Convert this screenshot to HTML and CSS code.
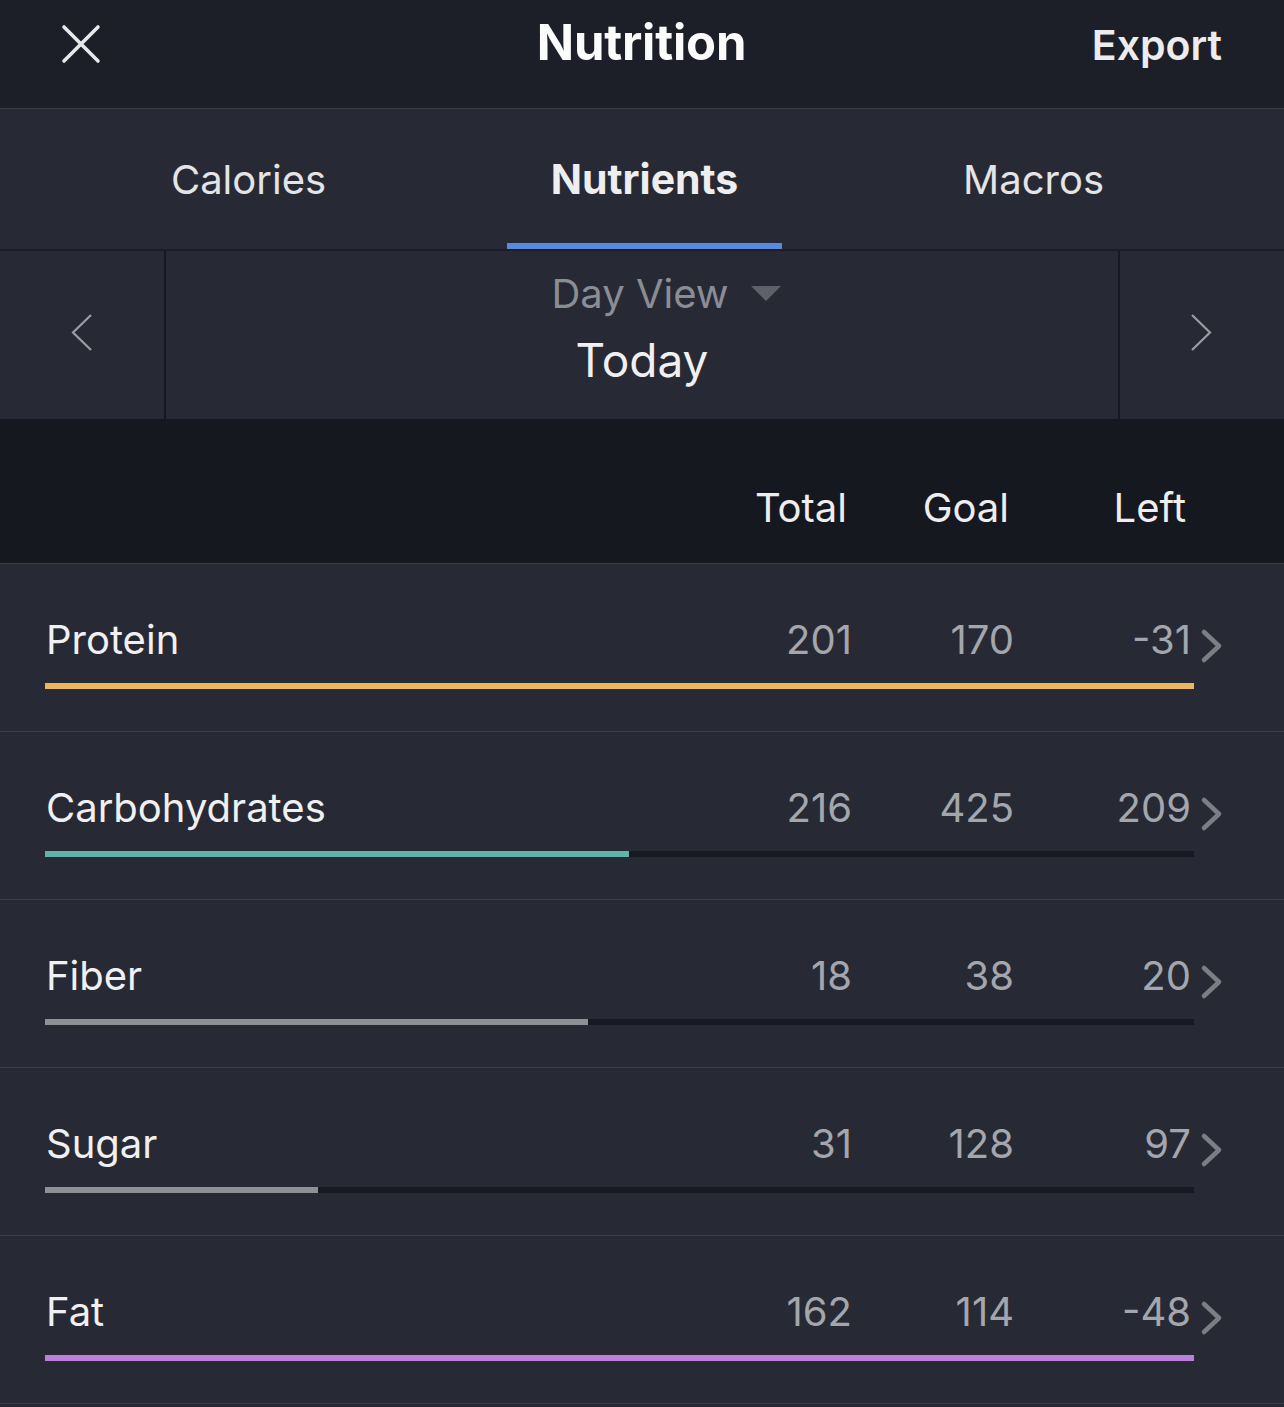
FILE: index.html
```html
<!DOCTYPE html>
<html lang="en">
<head>
  <meta charset="UTF-8">
  <title>Nutrition</title>
  <link rel="stylesheet" href="styles.css">
</head>
<body>
  <header class="topbar">
    <button class="close-btn" aria-label="Close">
      <svg width="40" height="40" viewBox="0 0 40 40"><path d="M3 3 L37 37 M37 3 L3 37" stroke="#e8e8ea" stroke-width="3.6" stroke-linecap="round" fill="none"/></svg>
    </button>
    <h1>Nutrition</h1>
    <a class="export">Export</a>
  </header>

  <nav class="tabs">
    <div class="tab">Calories</div>
    <div class="tab active">Nutrients</div>
    <div class="tab">Macros</div>
  </nav>

  <section class="day-nav">
    <div class="arrow">
      <svg width="24" height="40" viewBox="0 0 24 40"><path d="M21 2 L3 19.5 L21 37" stroke="#9b9da4" stroke-width="2.2" fill="none"/></svg>
    </div>
    <div class="day-center">
      <div class="day-view">Day View <span class="caret"></span></div>
      <div class="today">Today</div>
    </div>
    <div class="arrow">
      <svg width="24" height="40" viewBox="0 0 24 40"><path d="M3 2 L21 19.5 L3 37" stroke="#9b9da4" stroke-width="2.2" fill="none"/></svg>
    </div>
  </section>

  <div class="table-head">
    <span></span>
    <span>Total</span>
    <span>Goal</span>
    <span>Left</span>
    <span></span>
  </div>

  <ul class="rows">
    <li class="row">
      <div class="cells">
        <span class="name">Protein</span><span class="num">201</span><span class="num">170</span><span class="num">-31</span>
        <svg class="chev" width="24" height="36" viewBox="0 0 24 36"><path d="M4 4 L19 18 L4 32" stroke="#7c7e86" stroke-width="4.5" stroke-linecap="round" stroke-linejoin="round" fill="none"/></svg>
      </div>
      <div class="track"><div class="fill protein" style="width:100%"></div></div>
    </li>
    <li class="row">
      <div class="cells">
        <span class="name">Carbohydrates</span><span class="num">216</span><span class="num">425</span><span class="num">209</span>
        <svg class="chev" width="24" height="36" viewBox="0 0 24 36"><path d="M4 4 L19 18 L4 32" stroke="#7c7e86" stroke-width="4.5" stroke-linecap="round" stroke-linejoin="round" fill="none"/></svg>
      </div>
      <div class="track"><div class="fill carbs" style="width:50.8%"></div></div>
    </li>
    <li class="row">
      <div class="cells">
        <span class="name">Fiber</span><span class="num">18</span><span class="num">38</span><span class="num">20</span>
        <svg class="chev" width="24" height="36" viewBox="0 0 24 36"><path d="M4 4 L19 18 L4 32" stroke="#7c7e86" stroke-width="4.5" stroke-linecap="round" stroke-linejoin="round" fill="none"/></svg>
      </div>
      <div class="track"><div class="fill grey" style="width:47.3%"></div></div>
    </li>
    <li class="row">
      <div class="cells">
        <span class="name">Sugar</span><span class="num">31</span><span class="num">128</span><span class="num">97</span>
        <svg class="chev" width="24" height="36" viewBox="0 0 24 36"><path d="M4 4 L19 18 L4 32" stroke="#7c7e86" stroke-width="4.5" stroke-linecap="round" stroke-linejoin="round" fill="none"/></svg>
      </div>
      <div class="track"><div class="fill grey" style="width:23.8%"></div></div>
    </li>
    <li class="row">
      <div class="cells">
        <span class="name">Fat</span><span class="num">162</span><span class="num">114</span><span class="num">-48</span>
        <svg class="chev" width="24" height="36" viewBox="0 0 24 36"><path d="M4 4 L19 18 L4 32" stroke="#7c7e86" stroke-width="4.5" stroke-linecap="round" stroke-linejoin="round" fill="none"/></svg>
      </div>
      <div class="track"><div class="fill fat" style="width:100%"></div></div>
    </li>
  </ul>
</body>
</html>
```

FILE: styles.css
```css
* { box-sizing: border-box; }

body {
  margin: 0;
  background: #272a34;
  font-family: Inter, 'Noto Sans', sans-serif;
  color: #f0f0f2;
  width: 1284px;
  height: 1407px;
  overflow: hidden;
}

/* header */
.topbar {
  height: 109px;
  background: #1d1f28;
  border-bottom: 1px solid #3a3c45;
  display: grid;
  grid-template-columns: 1fr auto 1fr;
  align-items: center;
  padding: 0 62px 24px 61px;
}

.close-btn {
  background: none;
  border: none;
  padding: 0;
  width: 40px;
  height: 40px;
  margin-top: 4px;
}

.topbar h1 {
  margin: 0;
  font-size: 49px;
  font-weight: 700;
  color: #fbfbfc;
  letter-spacing: -0.2px;
}

.export {
  justify-self: end;
  font-size: 41px;
  font-weight: 600;
  color: #ececee;
  margin-top: 6px;
}

/* tabs */
.tabs {
  height: 142px;
  display: grid;
  grid-template-columns: 507px 275px 1fr;
  border-bottom: 2px solid #1c1e27;
}

.tab {
  display: flex;
  align-items: center;
  justify-content: center;
  font-size: 40px;
  color: #e4e4e7;
}

.tab:first-child { padding-right: 10px; }
.tab:last-child { justify-content: flex-end; padding-right: 180px; }

.tab.active {
  font-size: 41px;
  font-weight: 700;
  color: #eeeef0;
  border-bottom: 6px solid #5a8ae0;
  padding-top: 6px;
}

/* day navigation */
.day-nav {
  height: 168px;
  display: grid;
  grid-template-columns: 166px 1fr 166px;
}

.arrow {
  display: flex;
  align-items: center;
  justify-content: center;
  padding-bottom: 4px;
}

.arrow:first-child {
  border-right: 2px solid #171922;
}

.arrow:last-child {
  border-left: 2px solid #171922;
  padding-right: 2px;
}

.day-center {
  display: flex;
  flex-direction: column;
  align-items: center;
  padding-top: 18px;
}

.day-view {
  font-size: 40px;
  color: #8b8d95;
  display: flex;
  align-items: center;
  gap: 22px;
  padding-left: 48px;
}

.caret {
  width: 0;
  height: 0;
  border-left: 15px solid transparent;
  border-right: 15px solid transparent;
  border-top: 15px solid #5e6169;
}

.today {
  font-size: 46px;
  color: #f0f0f2;
  margin-top: 14px;
}

/* table */
.table-head {
  height: 145px;
  background: #161820;
  border-bottom: 1px solid #3a3c45;
  display: grid;
  grid-template-columns: 1fr 120px 162px 177px 31px;
  padding: 64px 62px 0 46px;
  font-size: 40px;
  color: #eeeef0;
}

.table-head span { text-align: right; padding-right: 5px; }

.rows {
  list-style: none;
  margin: 0;
  padding: 0;
}

.row {
  height: 168px;
  border-bottom: 1px solid #3c3e47;
  padding: 50px 62px 0 45px;
}

.cells {
  display: grid;
  grid-template-columns: 1fr 120px 162px 177px 31px;
  align-items: center;
  height: 50px;
}

.name {
  font-size: 40px;
  color: #f0f0f2;
  padding-left: 1px;
}

.num {
  font-size: 40px;
  color: #a4a6ad;
  text-align: right;
}

.chev {
  justify-self: end;
  margin-top: 14px;
  margin-right: -2px;
}

.track {
  height: 6px;
  margin-top: 19px;
  margin-right: 28px;
  background: #171922;
}

.fill { height: 100%; }
.protein { background: #ecb55e; }
.carbs { background: #5fb3a9; }
.grey { background: #8e9096; }
.fat { background: #bb80d8; }
```
